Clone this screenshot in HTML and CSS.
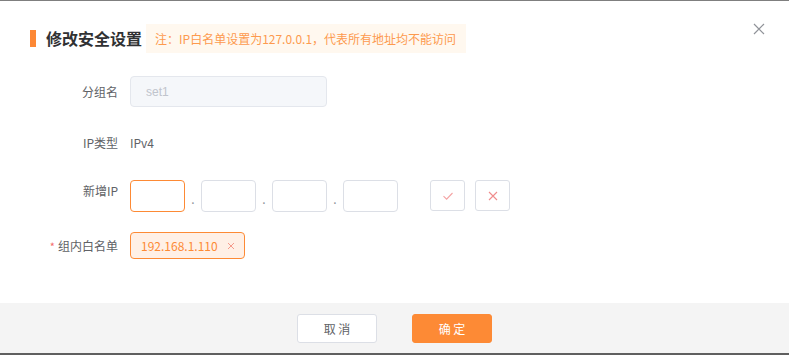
FILE: index.html
```html
<!DOCTYPE html>
<html lang="zh-CN">
<head>
  <meta charset="UTF-8" />
  <meta name="viewport" content="width=device-width, initial-scale=1" />
  <title>修改安全设置</title>
  <link rel="stylesheet" href="styles.css">
</head>
<body>
  <div class="dialog">
    <!-- 标题 -->
    <div class="dialog-header">
      <span class="title-mark"></span>
      <h2 class="title">修改安全设置</h2>
      <span class="note">注：IP白名单设置为127.0.0.1，代表所有地址均不能访问</span>
      <button class="close" aria-label="关闭">
        <svg width="12" height="12" viewBox="0 0 12 12"><path d="M1 1L11 11M11 1L1 11" stroke="#909399" stroke-width="1.2" fill="none"/></svg>
      </button>
    </div>

    <!-- 表单 -->
    <div class="dialog-body">
      <div class="form-row row-name">
        <label class="form-label">分组名</label>
        <div class="form-content">
          <input class="input input-disabled" value="set1" disabled>
        </div>
      </div>

      <div class="form-row row-type">
        <label class="form-label">IP类型</label>
        <div class="form-content">IPv4</div>
      </div>

      <div class="form-row row-ip">
        <label class="form-label label-top">新增IP</label>
        <div class="form-content ip-group">
          <input class="ip-box focused">
          <span class="ip-dot">.</span>
          <input class="ip-box">
          <span class="ip-dot">.</span>
          <input class="ip-box">
          <span class="ip-dot">.</span>
          <input class="ip-box">
          <div class="ip-actions">
            <button class="icon-btn">
              <svg width="12" height="12" viewBox="0 0 12 12"><path d="M1.5 6.2L4.6 9.2L10.5 3" stroke="#f4a3a3" stroke-width="1.1" fill="none"/></svg>
            </button>
            <button class="icon-btn">
              <svg width="10" height="10" viewBox="0 0 10 10"><path d="M1 1L9 9M9 1L1 9" stroke="#f08c8c" stroke-width="1.1" fill="none"/></svg>
            </button>
          </div>
        </div>
      </div>

      <div class="form-row row-list">
        <label class="form-label"><span class="required">*</span>组内白名单</label>
        <div class="form-content">
          <span class="tag">192.168.1.110
            <svg class="tag-close" width="8" height="8" viewBox="0 0 8 8"><path d="M1 1L7 7M7 1L1 7" stroke="#f59a8a" stroke-width="1" fill="none"/></svg>
          </span>
        </div>
      </div>
    </div>

    <!-- 底部按钮 -->
    <div class="dialog-footer">
      <button class="btn btn-default">取 消</button>
      <button class="btn btn-primary">确 定</button>
    </div>
  </div>
</body>
</html>
```

FILE: styles.css
```css
html, body {
  margin: 0;
  padding: 0;
}
body {
  width: 789px;
  height: 355px;
  overflow: hidden;
  font-family: "Noto Sans CJK SC", "Noto Sans", sans-serif;
  color: #606266;
  font-size: 12px;
  background: #fff;
}
.dialog {
  border-top: 1px solid #7f7f7f;
  border-bottom: 2px solid #5f5f5f;
  box-sizing: border-box;
  height: 355px;
  display: flex;
  flex-direction: column;
}
/* 标题 */
.dialog-header {
  display: flex;
  align-items: center;
  padding: 22px 20px 0 30px;
  height: 30px;
  position: relative;
}
.title-mark {
  width: 6px;
  height: 17px;
  background: #fd8835;
  margin-right: 10px;
}
.title {
  margin: 0;
  font-size: 16px;
  font-weight: bold;
  color: #303133;
  line-height: 30px;
}
.note {
  margin-left: 4px;
  height: 29px;
  line-height: 29px;
  padding: 0 10px 0 9px;
  background: #fff8ef;
  color: #fd9a4e;
  font-size: 12px;
}
.close {
  position: absolute;
  right: 24px;
  top: 22px;
  border: none;
  background: none;
  padding: 0;
  cursor: pointer;
}
/* 表单 */
.dialog-body {
  flex: 1;
  padding-top: 23px;
}
.form-row {
  display: flex;
  align-items: center;
}
.form-label {
  width: 118px;
  text-align: right;
  padding-right: 12px;
  color: #606266;
  white-space: nowrap;
}
.form-content {
  color: #606266;
}
.row-name {
  height: 31px;
}
.row-type {
  height: 30px;
  margin-top: 20px;
}
.row-ip {
  height: 31px;
  margin-top: 23px;
}
.row-ip .label-top {
  align-self: flex-start;
  line-height: 22px;
}
.row-list {
  height: 27px;
  margin-top: 21px;
}
.input {
  width: 197px;
  height: 31px;
  box-sizing: border-box;
  border: 1px solid #e4e7ed;
  border-radius: 4px;
  padding: 0 15px;
  font-family: "Liberation Sans", Arial, sans-serif;
  font-size: 12px;
  outline: none;
}
.input-disabled {
  background: #f5f7fa;
  color: #c0c4cc;
}
.ip-group {
  display: flex;
  align-items: center;
}
.ip-box {
  width: 55px;
  height: 32px;
  box-sizing: border-box;
  border: 1px solid #dcdfe6;
  border-radius: 4px;
  outline: none;
  padding: 0;
}
.ip-box.focused {
  border-color: #fd8a35;
}
.ip-dot {
  width: 16px;
  text-align: center;
  color: #909399;
  line-height: 1;
  padding-top: 6px;
}
.ip-actions {
  display: flex;
  gap: 10px;
  margin-left: 32px;
}
.icon-btn {
  width: 35px;
  height: 31px;
  border: 1px solid #dcdfe6;
  border-radius: 3px;
  background: #fff;
  display: flex;
  align-items: center;
  justify-content: center;
  padding: 0;
  cursor: pointer;
}
.required {
  color: #f56c6c;
  margin-right: 3px;
  font-size: 11px;
}
.tag {
  display: inline-flex;
  align-items: center;
  height: 27px;
  box-sizing: border-box;
  padding: 0 9px 0 10px;
  border: 1px solid #fd8a35;
  border-radius: 4px;
  background: #fff0e6;
  color: #fd8a35;
  font-size: 12px;
}
.tag-close {
  margin-left: 9px;
}
/* 底部 */
.dialog-footer {
  height: 50px;
  background: #f4f4f4;
  display: flex;
  justify-content: center;
  align-items: center;
  gap: 35px;
}
.btn {
  width: 80px;
  height: 29px;
  border-radius: 3px;
  font-family: "Noto Sans CJK SC", sans-serif;
  font-size: 12px;
  cursor: pointer;
  padding: 0;
}
.btn-default {
  background: #fff;
  border: 1px solid #dcdfe6;
  color: #606266;
}
.btn-primary {
  background: #fd8a35;
  border: 1px solid #fd8a35;
  color: #fff;
}
```
